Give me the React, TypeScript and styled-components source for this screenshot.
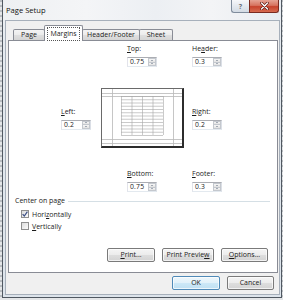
import React from "react";
import styled, { createGlobalStyle } from "styled-components";

const GlobalStyle = createGlobalStyle`
  html, body { margin: 0; padding: 0; }
  body {
    width: 283px;
    height: 300px;
    overflow: hidden;
    background: #d7d9db;
    font-family: "Open Sans", "Noto Sans", "DejaVu Sans", sans-serif;
    color: #1b1b1b;
  }
  #root { width: 283px; height: 300px; }
`;

const Desktop = styled.div`
  width: 283px;
  height: 300px;
  box-sizing: border-box;
  padding-left: 2px;
  background: repeating-linear-gradient(to bottom, #b9bdc1 0 2px, #e4e6e8 2px 5px);
`;

const Window = styled.div`
  width: 280px;
  height: 298px;
  box-sizing: border-box;
  border: 1px solid #505861;
  border-top: none;
  padding: 0 1px 2px 2px;
  background: linear-gradient(to bottom, #f2f4f6 0, #e6ebf0 40px, #dde4eb 100%);
  display: flex;
  flex-direction: column;
`;

const TitleBar = styled.div`
  height: 20px;
  flex: none;
  display: flex;
  align-items: flex-start;
  margin: 0 -1px 0 -2px;
  background: linear-gradient(to right, #eef0f2 0%, #f4f5f7 30%, #eceff3 55%, #f3f4f6 75%, #e8ecf1 100%);
`;

const Title = styled.div`
  margin-right: auto;
  padding-left: 3px;
  font-size: 7.6px;
  line-height: 20px;
  color: #101010;
`;

const HelpButton = styled.div`
  width: 18px;
  height: 13px;
  box-sizing: border-box;
  border: 1px solid #7f8c9c;
  border-top: none;
  border-right: none;
  border-bottom-left-radius: 3px;
  background: linear-gradient(to bottom, #f7f8fa 0%, #e4e9ef 50%, #d3dbe4 100%);
  display: flex;
  align-items: center;
  justify-content: center;
  font-size: 7px;
  font-weight: bold;
  color: #6a7078;
  line-height: 1;
`;

const CloseButton = styled.div`
  width: 30px;
  height: 13px;
  box-sizing: border-box;
  margin-right: 2px;
  border: 1px solid #7a2a20;
  border-top: none;
  border-bottom-right-radius: 3px;
  background: linear-gradient(to bottom, #e6a394 0%, #d7735f 45%, #c7422c 55%, #d66b50 100%);
  display: flex;
  align-items: center;
  justify-content: center;
`;

const Client = styled.div`
  flex: 1;
  box-sizing: border-box;
  border: 1px solid #a7b0bb;
  background: #f0f0f0;
  padding: 4px 1px 0 2px;
  display: flex;
  flex-direction: column;
`;

const TabStrip = styled.div`
  height: 15px;
  display: flex;
  align-items: flex-end;
  padding-left: 5px;
`;

const Tab = styled.div<{ $w: number; $active?: boolean }>`
  position: relative;
  z-index: ${(p) => (p.$active ? 2 : 1)};
  width: ${(p) => p.$w}px;
  height: ${(p) => (p.$active ? 16 : 11)}px;
  margin-bottom: ${(p) => (p.$active ? -1 : 0)}px;
  margin-left: -1px;
  &:first-child { margin-left: 0; }
  box-sizing: border-box;
  border: 1px solid #898c95;
  border-bottom: none;
  border-radius: 2px 2px 0 0;
  background: ${(p) =>
    p.$active ? "#ffffff" : "linear-gradient(to bottom, #f4f4f4 0%, #ebebeb 50%, #dfdfdf 51%, #d5d5d5 100%)"};
  display: flex;
  align-items: center;
  justify-content: center;
  font-size: 7px;
  line-height: 10px;
  color: #1a1a1a;
`;

const FocusText = styled.span`
  outline: 1px dotted #555;
  padding: 1px 2px;
`;

const Panel = styled.div`
  height: 233px;
  flex: none;
  box-sizing: border-box;
  border: 1px solid #898c95;
  background: #ffffff;
  display: flex;
  flex-direction: column;
`;

const MarginGrid = styled.div`
  display: grid;
  grid-template-columns: 52px 40px 26px 57px 8px 1fr;
  grid-template-rows: 23px 21px 60px 21px 23px;
  padding-top: 3px;
`;

const Field = styled.div<{ $col: number; $row: number; $center?: boolean }>`
  grid-column: ${(p) => p.$col};
  grid-row: ${(p) => p.$row};
  align-self: ${(p) => (p.$center ? "center" : "start")};
  display: flex;
  flex-direction: column;
  align-items: flex-start;
`;

const Label = styled.div`
  height: 10px;
  font-size: 7px;
  line-height: 10px;
  color: #1b1b1b;
`;

const Key = styled.u`
  text-decoration-thickness: 0.6px;
  text-underline-offset: 1px;
`;

const SpinBox = styled.div`
  margin-top: 3px;
  width: 30px;
  height: 10px;
  box-sizing: border-box;
  border: 1px solid;
  border-color: #abadb3 #dbdfe6 #e3e9ef #e2e3ea;
  background: #fff;
  display: flex;
`;

const SpinValue = styled.span`
  flex: 1;
  padding-left: 2px;
  font-size: 6.8px;
  line-height: 8px;
  color: #222;
  letter-spacing: 0.2px;
`;

const SpinButtons = styled.div`
  width: 8px;
  display: flex;
  flex-direction: column;
`;

const SpinArrow = styled.div<{ $down?: boolean }>`
  flex: 1;
  box-sizing: border-box;
  border: 1px solid #c4c8ce;
  border-top-width: ${(p) => (p.$down ? 0 : 1)}px;
  background: linear-gradient(to bottom, #f7f7f7, #e2e2e2);
  display: flex;
  align-items: center;
  justify-content: center;
  &::after {
    content: "";
    border-left: 1.5px solid transparent;
    border-right: 1.5px solid transparent;
    ${(p) => (p.$down ? "border-top: 1.5px solid #59667a;" : "border-bottom: 1.5px solid #59667a;")}
  }
`;

const Preview = styled.div`
  grid-column: 3 / span 2;
  grid-row: 3;
  width: 83px;
  height: 60px;
  box-sizing: border-box;
  border-left: 1px solid #6a6a6a;
  border-top: 1px solid #6a6a6a;
  border-right: 2px solid #2c2c2c;
  border-bottom: 2px solid #2c2c2c;
  background: #fff;
  display: flex;
`;

const Section = styled.div`
  margin-top: 4px;
  height: 10px;
  display: flex;
  align-items: center;
  padding: 0 7px 0 6px;
`;

const SectionTitle = styled.span`
  font-size: 7px;
  line-height: 10px;
`;

const Rule = styled.div`
  flex: 1;
  height: 1px;
  margin-left: 3px;
  margin-top: 1px;
  background: #d5dfe5;
`;

const CheckRow = styled.div<{ $first?: boolean }>`
  height: 12px;
  margin-top: ${(p) => (p.$first ? 2 : 0)}px;
  display: flex;
  align-items: center;
  padding-left: 12px;
  gap: 3px;
  font-size: 7px;
`;

const Box = styled.div`
  width: 8px;
  height: 8px;
  box-sizing: border-box;
  border: 1px solid #8f8f8f;
  background: linear-gradient(135deg, #dcdcdc, #fbfbfb);
  display: flex;
  align-items: center;
  justify-content: center;
`;

const ButtonRow = styled.div<{ $top: number; $right: number }>`
  display: flex;
  justify-content: flex-end;
  gap: 7px;
  margin-top: ${(p) => p.$top}px;
  padding-right: ${(p) => p.$right}px;
`;

const Button = styled.div<{ $w: number; $default?: boolean }>`
  width: ${(p) => p.$w}px;
  height: 14px;
  box-sizing: border-box;
  border: 1px solid ${(p) => (p.$default ? "#4f8ab8" : "#7a7a7a")};
  border-radius: 2px;
  background: ${(p) =>
    p.$default
      ? "linear-gradient(to bottom, #eef7fc 0%, #e1f1fa 50%, #cde8f7 51%, #bfe0f3 100%)"
      : "linear-gradient(to bottom, #f5f5f5 0%, #ececec 50%, #dedede 51%, #d3d3d3 100%)"};
  box-shadow: inset 0 0 0 1px rgba(255, 255, 255, 0.7);
  display: flex;
  align-items: center;
  justify-content: center;
  font-size: 7px;
  line-height: 12px;
  color: #1b1b1b;
`;

function Spin({ value }: { value: string }) {
  return (
    <SpinBox>
      <SpinValue>{value}</SpinValue>
      <SpinButtons>
        <SpinArrow />
        <SpinArrow $down />
      </SpinButtons>
    </SpinBox>
  );
}

function PagePicture() {
  const gridX = [19, 29.5, 40, 50.5, 61];
  const rows = Array.from({ length: 13 }, (_, i) => 7 + i * 3.25);
  return (
    <svg width="80" height="57" viewBox="0 0 80 57">
      <g stroke="#b8b8b8" strokeWidth="0.8" shapeRendering="crispEdges">
        <line x1="0" y1="4.5" x2="80" y2="4.5" />
        <line x1="0" y1="7.5" x2="80" y2="7.5" />
        <line x1="0" y1="50.5" x2="80" y2="50.5" />
        <line x1="0" y1="54.5" x2="80" y2="54.5" />
        <line x1="10.5" y1="0" x2="10.5" y2="57" />
        <line x1="71.5" y1="0" x2="71.5" y2="57" />
      </g>
      <g stroke="#a6a6a6" strokeWidth="0.6">
        {rows.map((y) => (
          <line key={y} x1="19" y1={y + 0.5} x2="61" y2={y + 0.5} />
        ))}
        {gridX.map((x) => (
          <line key={x} x1={x + 0.5} y1="7" x2={x + 0.5} y2="46" />
        ))}
      </g>
    </svg>
  );
}

export default function App() {
  return (
    <>
      <GlobalStyle />
      <Desktop>
        <Window>
          <TitleBar>
            <Title>Page Setup</Title>
            <HelpButton>?</HelpButton>
            <CloseButton>
              <svg width="9" height="8" viewBox="0 0 9 8">
                <path d="M1.5 1 L7.5 7 M7.5 1 L1.5 7" stroke="#5a1a12" strokeWidth="2.6" strokeLinecap="round" />
                <path d="M1.5 1 L7.5 7 M7.5 1 L1.5 7" stroke="#ffffff" strokeWidth="1.4" strokeLinecap="round" />
              </svg>
            </CloseButton>
          </TitleBar>
          <Client>
            <TabStrip>
              <Tab $w={32}>Page</Tab>
              <Tab $w={39} $active>
                <FocusText>Margins</FocusText>
              </Tab>
              <Tab $w={58}>Header/Footer</Tab>
              <Tab $w={34}>Sheet</Tab>
            </TabStrip>
            <Panel>
              <MarginGrid>
                <Field $col={4} $row={1}>
                  <Label><Key>T</Key>op:</Label>
                  <Spin value="0.75" />
                </Field>
                <Field $col={6} $row={1}>
                  <Label>He<Key>a</Key>der:</Label>
                  <Spin value="0.3" />
                </Field>
                <Field $col={2} $row={3} $center>
                  <Label><Key>L</Key>eft:</Label>
                  <Spin value="0.2" />
                </Field>
                <Preview>
                  <PagePicture />
                </Preview>
                <Field $col={6} $row={3} $center>
                  <Label><Key>R</Key>ight:</Label>
                  <Spin value="0.2" />
                </Field>
                <Field $col={4} $row={5}>
                  <Label><Key>B</Key>ottom:</Label>
                  <Spin value="0.75" />
                </Field>
                <Field $col={6} $row={5}>
                  <Label><Key>F</Key>ooter:</Label>
                  <Spin value="0.3" />
                </Field>
              </MarginGrid>
              <Section>
                <SectionTitle>Center on page</SectionTitle>
                <Rule />
              </Section>
              <CheckRow $first>
                <Box>
                  <svg width="6" height="6" viewBox="0 0 6 6">
                    <path d="M0.6 3.2 L2.3 5 L5.4 0.6" fill="none" stroke="#3b4f86" strokeWidth="1.2" />
                  </svg>
                </Box>
                <span>Hori<Key>z</Key>ontally</span>
              </CheckRow>
              <CheckRow>
                <Box />
                <span><Key>V</Key>ertically</span>
              </CheckRow>
              <ButtonRow $top={16} $right={9}>
                <Button $w={48}><span><Key>P</Key>rint...</span></Button>
                <Button $w={52}><span>Print Previe<Key>w</Key></span></Button>
                <Button $w={47}><span><Key>O</Key>ptions...</span></Button>
              </ButtonRow>
            </Panel>
            <ButtonRow $top={3} $right={4}>
              <Button $w={48} $default>OK</Button>
              <Button $w={47}>Cancel</Button>
            </ButtonRow>
          </Client>
        </Window>
      </Desktop>
    </>
  );
}
